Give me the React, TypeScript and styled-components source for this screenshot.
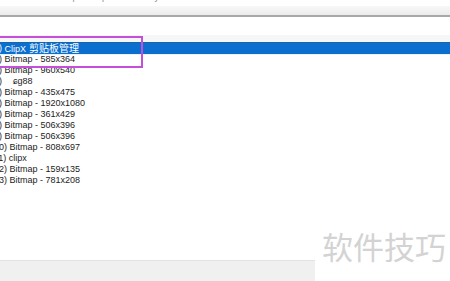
import React from 'react';
import styled, { createGlobalStyle } from 'styled-components';

const GlobalStyle = createGlobalStyle`
  html, body {
    margin: 0;
    padding: 0;
    background: #ffffff;
  }
  body {
    font-family: "Liberation Sans", Arial, sans-serif;
  }
`;

const Window = styled.div`
  position: relative;
  width: 450px;
  height: 281px;
  overflow: hidden;
  background: #ffffff;
  display: flex;
  flex-direction: column;
`;

// only the bottom of the caption line is still in view
const TitleClip = styled.div`
  height: 6px;
  overflow: hidden;
  background: #ffffff;
`;

const TitleText = styled.div`
  margin-top: -8px;
  padding-left: 62px;
  font-size: 9px;
  line-height: 11px;
  color: #8a8a8a;
  white-space: nowrap;
`;

const ToolBand = styled.div`
  height: 9px;
  background: linear-gradient(#f8f8f8, #ebebeb);
  border-bottom: 2px solid #a8a8a8;
`;

const Gap = styled.div`
  height: 18px;
`;

const FocusBand = styled.div`
  height: 8px;
  background: #f4f6f8;
`;

const List = styled.div`
  display: flex;
  flex-direction: column;
  flex: 1;
`;

const Row = styled.div<{ $selected?: boolean }>`
  height: 11px;
  display: flex;
  align-items: center;
  margin-left: -6px;
  font-size: 9px;
  line-height: 11px;
  white-space: nowrap;
  color: ${(p) => (p.$selected ? '#ffffff' : '#1c1c1c')};
  background: ${(p) => (p.$selected ? '#0a6fcf' : 'transparent')};
  box-shadow: ${(p) => (p.$selected ? '0 1px 0 #e8f3fd, 0 -1px 0 #1d63a8' : 'none')};
`;

const Num = styled.span`
  flex: none;
`;

const Label = styled.span<{ $indent?: boolean }>`
  margin-left: ${(p) => (p.$indent ? '11px' : '2.5px')};
`;

const Cjk = styled.span`
  font-family: "Noto Sans CJK SC", sans-serif;
  font-size: 10px;
  margin-left: 3px;
`;

const Footer = styled.div`
  height: 20px;
  width: 315px;
  background: #f0f0f0;
  border-top: 1px solid #e2e2e2;
`;

const Callout = styled.div`
  position: absolute;
  left: -4px;
  top: 36px;
  width: 143px;
  height: 28px;
  border: 2px solid #c54fd9;
`;

const Watermark = styled.div`
  position: absolute;
  right: 4px;
  top: 226px;
  font-family: "Noto Sans CJK SC", sans-serif;
  font-size: 31px;
  color: #d3d3d3;
  line-height: 40px;
`;

const items: { n: string; label: string; indent?: boolean }[] = [
  { n: '1)', label: 'Bitmap - 585x364' },
  { n: '2)', label: 'Bitmap - 960x540' },
  { n: '3)', label: 'ɕg88', indent: true },
  { n: '4)', label: 'Bitmap - 435x475' },
  { n: '5)', label: 'Bitmap - 1920x1080' },
  { n: '6)', label: 'Bitmap - 361x429' },
  { n: '7)', label: 'Bitmap - 506x396' },
  { n: '8)', label: 'Bitmap - 506x396' },
  { n: '10)', label: 'Bitmap - 808x697' },
  { n: '11)', label: 'clipx' },
  { n: '12)', label: 'Bitmap - 159x135' },
  { n: '13)', label: 'Bitmap - 781x208' },
];

export default function App() {
  return (
    <>
      <GlobalStyle />
      <Window>
        <TitleClip>
          <TitleText>ClipX - Clipboard history</TitleText>
        </TitleClip>
        <ToolBand />
        <Gap />
        <FocusBand />
        <List>
          <Row $selected>
            <Num>0)</Num>
            <Label>
              ClipX<Cjk>剪贴板管理</Cjk>
            </Label>
          </Row>
          {items.map((it, i) => (
            <Row key={i}>
              <Num>{it.n}</Num>
              <Label $indent={it.indent}>{it.label}</Label>
            </Row>
          ))}
        </List>
        <Footer />
        <Callout />
        <Watermark>软件技巧</Watermark>
      </Window>
    </>
  );
}
